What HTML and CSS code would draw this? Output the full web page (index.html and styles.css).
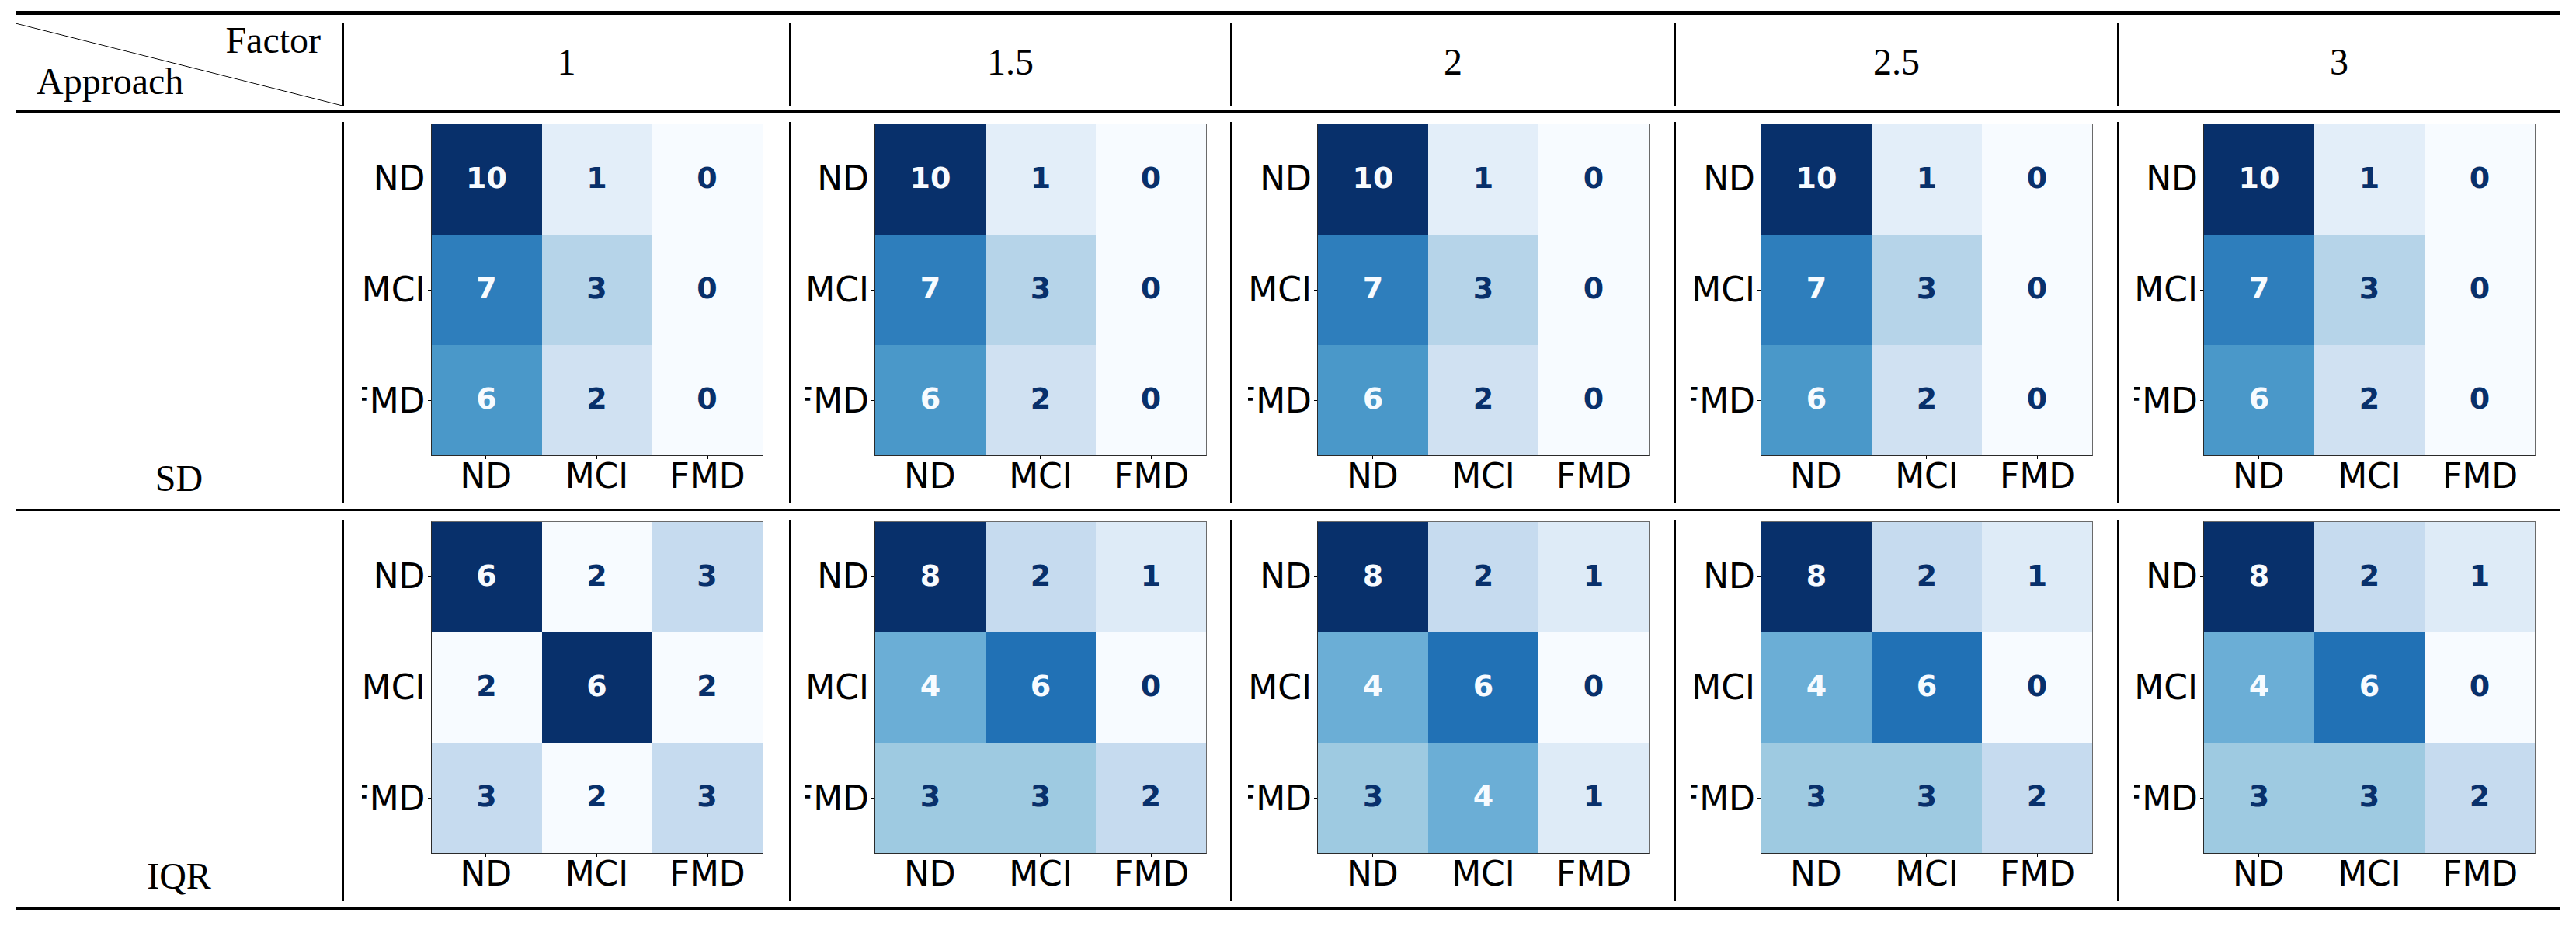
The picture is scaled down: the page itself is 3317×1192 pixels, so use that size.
FILE: index.html
```html
<!DOCTYPE html>
<html lang="en">
<head>
<meta charset="utf-8">
<title>Confusion matrices by approach and factor</title>
<link rel="stylesheet" href="styles.css">
</head>
<body>
<div class="table">
  <div class="rule rule-top"></div>

  <div class="hcell corner"><div class="corner-in"><span class="factor">Factor</span><span class="approach">Approach</span></div></div>
  <div class="hcell"><div class="hin">1</div></div>
  <div class="hcell"><div class="hin">1.5</div></div>
  <div class="hcell"><div class="hin">2</div></div>
  <div class="hcell"><div class="hin">2.5</div></div>
  <div class="hcell"><div class="hin">3</div></div>

  <div class="rule rule-head"></div>

  <!-- SD row -->
  <div class="rcell"><div class="rlabel">SD</div></div>

  <div class="dcell"><div class="din"><div class="fig">
    <div class="ylabels"><div class="yl"><span>ND</span><i class="yt"></i></div><div class="yl"><span>MCI</span><i class="yt"></i></div><div class="yl"><span>FMD</span><i class="yt"></i></div></div>
    <div class="axes">
      <div class="c s100 lt">10</div><div class="c s10">1</div><div class="c s0">0</div>
      <div class="c s70 lt">7</div><div class="c s30">3</div><div class="c s0">0</div>
      <div class="c s60 lt">6</div><div class="c s20">2</div><div class="c s0">0</div>
    </div>
    <div class="xlabels"><div class="xl"><i class="xt"></i><span>ND</span></div><div class="xl"><i class="xt"></i><span>MCI</span></div><div class="xl"><i class="xt"></i><span>FMD</span></div></div>
  </div></div></div>

  <div class="dcell"><div class="din"><div class="fig">
    <div class="ylabels"><div class="yl"><span>ND</span><i class="yt"></i></div><div class="yl"><span>MCI</span><i class="yt"></i></div><div class="yl"><span>FMD</span><i class="yt"></i></div></div>
    <div class="axes">
      <div class="c s100 lt">10</div><div class="c s10">1</div><div class="c s0">0</div>
      <div class="c s70 lt">7</div><div class="c s30">3</div><div class="c s0">0</div>
      <div class="c s60 lt">6</div><div class="c s20">2</div><div class="c s0">0</div>
    </div>
    <div class="xlabels"><div class="xl"><i class="xt"></i><span>ND</span></div><div class="xl"><i class="xt"></i><span>MCI</span></div><div class="xl"><i class="xt"></i><span>FMD</span></div></div>
  </div></div></div>

  <div class="dcell"><div class="din"><div class="fig">
    <div class="ylabels"><div class="yl"><span>ND</span><i class="yt"></i></div><div class="yl"><span>MCI</span><i class="yt"></i></div><div class="yl"><span>FMD</span><i class="yt"></i></div></div>
    <div class="axes">
      <div class="c s100 lt">10</div><div class="c s10">1</div><div class="c s0">0</div>
      <div class="c s70 lt">7</div><div class="c s30">3</div><div class="c s0">0</div>
      <div class="c s60 lt">6</div><div class="c s20">2</div><div class="c s0">0</div>
    </div>
    <div class="xlabels"><div class="xl"><i class="xt"></i><span>ND</span></div><div class="xl"><i class="xt"></i><span>MCI</span></div><div class="xl"><i class="xt"></i><span>FMD</span></div></div>
  </div></div></div>

  <div class="dcell"><div class="din"><div class="fig">
    <div class="ylabels"><div class="yl"><span>ND</span><i class="yt"></i></div><div class="yl"><span>MCI</span><i class="yt"></i></div><div class="yl"><span>FMD</span><i class="yt"></i></div></div>
    <div class="axes">
      <div class="c s100 lt">10</div><div class="c s10">1</div><div class="c s0">0</div>
      <div class="c s70 lt">7</div><div class="c s30">3</div><div class="c s0">0</div>
      <div class="c s60 lt">6</div><div class="c s20">2</div><div class="c s0">0</div>
    </div>
    <div class="xlabels"><div class="xl"><i class="xt"></i><span>ND</span></div><div class="xl"><i class="xt"></i><span>MCI</span></div><div class="xl"><i class="xt"></i><span>FMD</span></div></div>
  </div></div></div>

  <div class="dcell"><div class="din"><div class="fig">
    <div class="ylabels"><div class="yl"><span>ND</span><i class="yt"></i></div><div class="yl"><span>MCI</span><i class="yt"></i></div><div class="yl"><span>FMD</span><i class="yt"></i></div></div>
    <div class="axes">
      <div class="c s100 lt">10</div><div class="c s10">1</div><div class="c s0">0</div>
      <div class="c s70 lt">7</div><div class="c s30">3</div><div class="c s0">0</div>
      <div class="c s60 lt">6</div><div class="c s20">2</div><div class="c s0">0</div>
    </div>
    <div class="xlabels"><div class="xl"><i class="xt"></i><span>ND</span></div><div class="xl"><i class="xt"></i><span>MCI</span></div><div class="xl"><i class="xt"></i><span>FMD</span></div></div>
  </div></div></div>

  <div class="rule rule-mid"></div>

  <!-- IQR row -->
  <div class="rcell"><div class="rlabel">IQR</div></div>

  <div class="dcell"><div class="din"><div class="fig">
    <div class="ylabels"><div class="yl"><span>ND</span><i class="yt"></i></div><div class="yl"><span>MCI</span><i class="yt"></i></div><div class="yl"><span>FMD</span><i class="yt"></i></div></div>
    <div class="axes">
      <div class="c s100 lt">6</div><div class="c s0">2</div><div class="c s25">3</div>
      <div class="c s0">2</div><div class="c s100 lt">6</div><div class="c s0">2</div>
      <div class="c s25">3</div><div class="c s0">2</div><div class="c s25">3</div>
    </div>
    <div class="xlabels"><div class="xl"><i class="xt"></i><span>ND</span></div><div class="xl"><i class="xt"></i><span>MCI</span></div><div class="xl"><i class="xt"></i><span>FMD</span></div></div>
  </div></div></div>

  <div class="dcell"><div class="din"><div class="fig">
    <div class="ylabels"><div class="yl"><span>ND</span><i class="yt"></i></div><div class="yl"><span>MCI</span><i class="yt"></i></div><div class="yl"><span>FMD</span><i class="yt"></i></div></div>
    <div class="axes">
      <div class="c s100 lt">8</div><div class="c s25">2</div><div class="c s125">1</div>
      <div class="c s50 lt">4</div><div class="c s75 lt">6</div><div class="c s0">0</div>
      <div class="c s375">3</div><div class="c s375">3</div><div class="c s25">2</div>
    </div>
    <div class="xlabels"><div class="xl"><i class="xt"></i><span>ND</span></div><div class="xl"><i class="xt"></i><span>MCI</span></div><div class="xl"><i class="xt"></i><span>FMD</span></div></div>
  </div></div></div>

  <div class="dcell"><div class="din"><div class="fig">
    <div class="ylabels"><div class="yl"><span>ND</span><i class="yt"></i></div><div class="yl"><span>MCI</span><i class="yt"></i></div><div class="yl"><span>FMD</span><i class="yt"></i></div></div>
    <div class="axes">
      <div class="c s100 lt">8</div><div class="c s25">2</div><div class="c s125">1</div>
      <div class="c s50 lt">4</div><div class="c s75 lt">6</div><div class="c s0">0</div>
      <div class="c s375">3</div><div class="c s50 lt">4</div><div class="c s125">1</div>
    </div>
    <div class="xlabels"><div class="xl"><i class="xt"></i><span>ND</span></div><div class="xl"><i class="xt"></i><span>MCI</span></div><div class="xl"><i class="xt"></i><span>FMD</span></div></div>
  </div></div></div>

  <div class="dcell"><div class="din"><div class="fig">
    <div class="ylabels"><div class="yl"><span>ND</span><i class="yt"></i></div><div class="yl"><span>MCI</span><i class="yt"></i></div><div class="yl"><span>FMD</span><i class="yt"></i></div></div>
    <div class="axes">
      <div class="c s100 lt">8</div><div class="c s25">2</div><div class="c s125">1</div>
      <div class="c s50 lt">4</div><div class="c s75 lt">6</div><div class="c s0">0</div>
      <div class="c s375">3</div><div class="c s375">3</div><div class="c s25">2</div>
    </div>
    <div class="xlabels"><div class="xl"><i class="xt"></i><span>ND</span></div><div class="xl"><i class="xt"></i><span>MCI</span></div><div class="xl"><i class="xt"></i><span>FMD</span></div></div>
  </div></div></div>

  <div class="dcell"><div class="din"><div class="fig">
    <div class="ylabels"><div class="yl"><span>ND</span><i class="yt"></i></div><div class="yl"><span>MCI</span><i class="yt"></i></div><div class="yl"><span>FMD</span><i class="yt"></i></div></div>
    <div class="axes">
      <div class="c s100 lt">8</div><div class="c s25">2</div><div class="c s125">1</div>
      <div class="c s50 lt">4</div><div class="c s75 lt">6</div><div class="c s0">0</div>
      <div class="c s375">3</div><div class="c s375">3</div><div class="c s25">2</div>
    </div>
    <div class="xlabels"><div class="xl"><i class="xt"></i><span>ND</span></div><div class="xl"><i class="xt"></i><span>MCI</span></div><div class="xl"><i class="xt"></i><span>FMD</span></div></div>
  </div></div></div>

  <div class="rule rule-bottom"></div>
</div>
</body>
</html>
```

FILE: styles.css
```css
* { box-sizing: border-box; }

html, body {
  margin: 0;
  padding: 0;
  background: #ffffff;
}

body {
  width: 3317px;
  height: 1192px;
  overflow: hidden;
}

.table {
  margin: 14px 0 0 20px;
  display: grid;
  grid-template-columns: 421px 575px 568px 572px 570px 570px;
  grid-template-rows: 5px 123px 4px 509px 3px 509px 4px;
  font-family: "Liberation Serif", "Times New Roman", serif;
  color: #000;
}

.rule {
  grid-column: 1 / -1;
  background: #000;
}

/* header */
.hcell {
  padding: 11px 0 6px;
}

.hin {
  height: 100%;
  border-left: 2px solid #000;
  display: flex;
  align-items: center;
  justify-content: center;
  padding-bottom: 6px;
  font-size: 48px;
  line-height: 1;
}

.corner-in {
  height: 100%;
  display: flex;
  flex-direction: column;
  justify-content: space-between;
  padding: 0 28px 10px 27px;
  font-size: 48px;
  line-height: 0.9;
  background: linear-gradient(to top right,
    rgba(0,0,0,0) calc(50% - 0.9px),
    #000 50%,
    rgba(0,0,0,0) calc(50% + 0.9px));
}

.factor { align-self: flex-end; }
.approach { align-self: flex-start; }

/* body rows */
.rcell,
.dcell {
  padding: 11px 0 7px;
}

.rlabel {
  height: 100%;
  display: flex;
  flex-direction: column;
  justify-content: flex-end;
  align-items: center;
  padding-bottom: 11px;
  font-size: 48px;
  line-height: 0.9;
}

.din {
  height: 100%;
  border-left: 2px solid #000;
  display: flex;
  justify-content: center;
  align-items: flex-start;
  padding-top: 2px;
}

/* confusion matrix figure */
.fig {
  width: 528px;
  display: grid;
  grid-template-columns: 89px 428px 11px;
  grid-template-rows: 428px 56px;
  overflow: hidden;
  font-family: "DejaVu Sans", "Noto Sans", sans-serif;
  color: #000;
}

.ylabels {
  grid-column: 1;
  grid-row: 1;
  min-width: 0;
  display: flex;
  flex-direction: column;
}

.yl {
  flex: 1 1 0;
  width: 89px;
  display: flex;
  justify-content: flex-end;
  align-items: center;
  font-size: 44px;
  line-height: 1;
}

.yl span {
  flex: none;
  margin-right: 3px;
}

.yt {
  display: block;
  flex: none;
  width: 4px;
  height: 1px;
  background: #000;
}

.axes {
  grid-column: 2;
  grid-row: 1;
  display: grid;
  grid-template-columns: repeat(3, 1fr);
  grid-template-rows: repeat(3, 1fr);
  border: 1px solid #6a6a6a;
  border-left-color: #2a2a2a;
  border-bottom-color: #2a2a2a;
}

.c {
  display: flex;
  align-items: center;
  justify-content: center;
  padding-bottom: 5px;
  font-size: 38px;
  font-weight: 700;
  line-height: 1;
  color: #08306b;
}

.c.lt { color: #f7fbff; }

.xlabels {
  grid-column: 2;
  grid-row: 2;
  display: grid;
  grid-template-columns: repeat(3, 1fr);
  align-items: start;
}

.xl {
  display: flex;
  flex-direction: column;
  align-items: center;
  font-size: 44px;
  line-height: 1;
}

.xt {
  display: block;
  width: 1px;
  height: 4px;
  background: #000;
}

/* Blues colormap steps */
.s0   { background: #f7fbff; }
.s10  { background: #e3eef9; }
.s125 { background: #deebf7; }
.s20  { background: #d0e1f2; }
.s25  { background: #c6dbef; }
.s30  { background: #b6d4e9; }
.s375 { background: #9ecae1; }
.s50  { background: #6baed6; }
.s60  { background: #4a98c9; }
.s70  { background: #2e7ebc; }
.s75  { background: #2171b5; }
.s100 { background: #08306b; }
```
